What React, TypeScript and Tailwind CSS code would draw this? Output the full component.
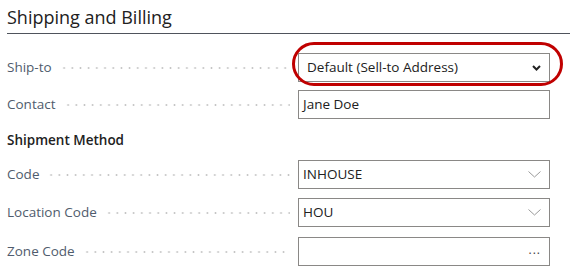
import React from "react";

const font = { fontFamily: '"Open Sans", "Noto Sans", sans-serif' };

function Leader() {
  return (
    <div className="flex-1 h-[2px] ml-[8px] mr-[4px] mt-[1px] bg-[radial-gradient(circle,#c4c4c4_0.9px,transparent_1.1px)] bg-[length:8.2px_2px] bg-repeat-x" />
  );
}

function Row({ label, children }: { label: string; children: React.ReactNode }) {
  return (
    <div className="flex items-center h-[29px]">
      <div className="flex items-center flex-1 min-w-0">
        <span className="text-[13.5px] text-[#505c6d] whitespace-nowrap leading-none">{label}</span>
        <Leader />
      </div>
      <div className="w-[252px] ml-[4px] h-[29px]">{children}</div>
    </div>
  );
}

function ThinChevron() {
  return (
    <svg width="13" height="7" viewBox="0 0 13 7" className="shrink-0">
      <path d="M0.5 0.5 L6.5 6 L12.5 0.5" fill="none" stroke="#9a9a9a" strokeWidth="1" />
    </svg>
  );
}

function Box({ value, icon }: { value: string; icon: React.ReactNode }) {
  return (
    <div className="h-full border border-[#8a8886] bg-white flex items-center pl-[4px] pr-[8px]">
      <span className="flex-1 text-[13.5px] text-[#212121] leading-none">{value}</span>
      {icon}
    </div>
  );
}

export default function App() {
  return (
    <div className="w-[570px] h-[270px] bg-white overflow-hidden" style={font}>
      <div className="pl-[7px]">
        <div className="h-[34px] border-b border-[#4f545c] flex items-start pt-[5px]">
          <span className="text-[18px] text-[#212121] leading-[24px]">Shipping and Billing</span>
        </div>
        <div className="pr-[20px]">
          <div className="mt-[19px]">
            <Row label="Ship-to">
              <div className="relative h-full">
                <div className="absolute -left-[6px] -top-[11px] w-[271px] h-[44px] rounded-[22px] border-[3px] border-[#c00000] pointer-events-none" />
                <div className="h-full border border-[#8a8886] bg-white flex items-center pl-[8px] pr-[8px]">
                  <span className="flex-1 text-[13.5px] text-[#212121] leading-none">Default (Sell-to Address)</span>
                  <svg width="9" height="6" viewBox="0 0 9 6">
                    <path d="M1 1 L4.5 4.5 L8 1" fill="none" stroke="#222" strokeWidth="2" />
                  </svg>
                </div>
              </div>
            </Row>
          </div>
          <div className="mt-[8px]">
            <Row label="Contact">
              <Box value="Jane Doe" icon={null} />
            </Row>
          </div>
          <div className="h-[41px] flex items-center pt-[3px]">
            <span className="text-[13.5px] font-semibold text-[#212121] leading-none">Shipment Method</span>
          </div>
          <Row label="Code">
            <Box value="INHOUSE" icon={<ThinChevron />} />
          </Row>
          <div className="mt-[9px]">
            <Row label="Location Code">
              <Box value="HOU" icon={<ThinChevron />} />
            </Row>
          </div>
          <div className="mt-[10px]">
            <Row label="Zone Code">
              <Box
                value=""
                icon={<span className="text-[12px] text-[#444] leading-none tracking-[1px] pb-[4px]">...</span>}
              />
            </Row>
          </div>
        </div>
      </div>
    </div>
  );
}
